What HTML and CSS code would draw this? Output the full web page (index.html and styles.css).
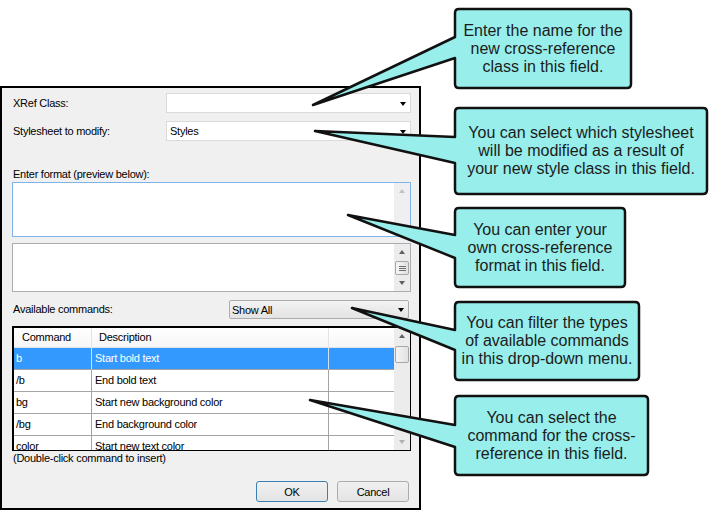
FILE: index.html
```html
<!DOCTYPE html>
<html>
<head>
<meta charset="utf-8">
<link rel="stylesheet" href="styles.css">
</head>
<body>
<div class="page">
  <div class="dialog">
    <div class="field-row">
      <span class="lbl">XRef Class:</span>
      <div class="combo"><span class="val"></span><span class="dd-arrow"></span></div>
    </div>
    <div class="field-row second">
      <span class="lbl">Stylesheet to modify:</span>
      <div class="combo"><span class="val">Styles</span><span class="dd-arrow"></span></div>
    </div>
    <div class="fmt-label">Enter format (preview below):</div>
    <div class="textbox tb1">
      <div class="tb-area"></div>
      <div class="vscroll light">
        <div class="sb-btn"><span class="arr-up dis"></span></div>
        <div class="spacer"></div>
        <div class="sb-btn"><span class="arr-down dis"></span></div>
      </div>
    </div>
    <div class="textbox tb2">
      <div class="tb-area"></div>
      <div class="vscroll">
        <div class="sb-btn"><span class="arr-up"></span></div>
        <div class="thumb small"><span class="grip"></span></div>
        <div class="spacer"></div>
        <div class="sb-btn"><span class="arr-down"></span></div>
      </div>
    </div>
    <div class="cmd-row">
      <span class="lbl">Available commands:</span>
      <div class="dd"><span class="val">Show All</span><span class="dd-arrow"></span></div>
    </div>
    <div class="listview">
      <div class="lv-body">
        <table class="grid">
          <thead>
            <tr><th class="c1">Command</th><th class="c2">Description</th><th class="c3"></th></tr>
          </thead>
          <tbody>
            <tr class="sel"><td>b</td><td>Start bold text</td><td></td></tr>
            <tr><td>/b</td><td>End bold text</td><td></td></tr>
            <tr><td>bg</td><td>Start new background color</td><td></td></tr>
            <tr><td>/bg</td><td>End background color</td><td></td></tr>
            <tr><td>color</td><td>Start new text color</td><td></td></tr>
          </tbody>
        </table>
      </div>
      <div class="vscroll">
        <div class="sb-btn"><span class="arr-up"></span></div>
        <div class="thumb big"></div>
        <div class="spacer"></div>
        <div class="sb-btn"><span class="arr-down dis"></span></div>
      </div>
    </div>
    <div class="hint">(Double-click command to insert)</div>
    <div class="buttons">
      <button class="btn ok">OK</button>
      <button class="btn">Cancel</button>
    </div>
  </div>
</div>

<svg class="callouts" width="716" height="511" viewBox="0 0 716 511" xmlns="http://www.w3.org/2000/svg">
  <path d="M459,9 H627 Q631,9 631,13 V84 Q631,88 627,88 H459 Q455,88 455,84 V58 L313,105 L455,37 V13 Q455,9 459,9 Z"/>
  <path d="M459,108 H703 Q707,108 707,112 V190 Q707,194 703,194 H459 Q455,194 455,190 V163 L315,131 L455,137 V112 Q455,108 459,108 Z"/>
  <path d="M459,208 H621 Q625,208 625,212 V283 Q625,287 621,287 H459 Q455,287 455,283 V258 L348,215 L455,235 V212 Q455,208 459,208 Z"/>
  <path d="M459,302 H635 Q639,302 639,306 V376 Q639,380 635,380 H459 Q455,380 455,376 V350 L352,308 L455,330 V306 Q455,302 459,302 Z"/>
  <path d="M459,396 H644 Q648,396 648,400 V471 Q648,475 644,475 H459 Q455,475 455,471 V447 L310,400 L455,425 V400 Q455,396 459,396 Z"/>
</svg>

<div class="callout-text ct1">Enter the name for the<br>new cross-reference<br>class in this field.</div>
<div class="callout-text ct2">You can select which stylesheet<br>will be modified as a result of<br>your new style class in this field.</div>
<div class="callout-text ct3">You can enter your<br>own cross-reference<br>format in this field.</div>
<div class="callout-text ct4">You can filter the types<br>of available commands<br>in this drop-down menu.</div>
<div class="callout-text ct5">You can select the<br>command for the cross-<br>reference in this field.</div>
</body>
</html>
```

FILE: styles.css
```css
* { box-sizing: border-box; }

html, body {
  margin: 0;
  padding: 0;
  background: #ffffff;
}

body {
  width: 716px;
  height: 511px;
  position: relative;
  overflow: hidden;
  font-family: "Liberation Sans", Arial, sans-serif;
}

.page {
  padding-top: 86px;
}

.dialog {
  width: 421px;
  height: 424px;
  border: 2px solid #000;
  background: #f0f0f0;
  padding: 5px 8px 0 10px;
  font-size: 11px;
  letter-spacing: -0.25px;
  color: #000;
}

.field-row {
  display: flex;
  height: 20px;
}

.field-row.second {
  margin-top: 8px;
}

.field-row .lbl {
  width: 154px;
  padding-left: 1px;
  line-height: 20px;
}

.combo {
  flex: 1;
  display: flex;
  align-items: center;
  height: 20px;
  background: #fff;
  border: 1px solid #dadada;
  padding: 0 4px 0 3px;
}

.val {
  flex: 1;
  white-space: nowrap;
}

.dd-arrow {
  width: 0;
  height: 0;
  border-left: 3.5px solid transparent;
  border-right: 3.5px solid transparent;
  border-top: 4px solid #000;
  margin-top: 1px;
}

.fmt-label {
  margin-top: 25px;
  height: 16px;
  line-height: 16px;
  padding-left: 1px;
}

.textbox {
  display: flex;
  background: #fff;
  border: 1px solid #abadb3;
}

.tb1 {
  height: 55px;
  margin-bottom: 6px;
  border-color: #7eb4ea;
}

.tb2 {
  height: 49px;
}

.tb-area {
  flex: 1;
}

.vscroll {
  width: 16px;
  display: flex;
  flex-direction: column;
  background: #ececec;
}

.vscroll.light {
  background: #efefef;
}

.sb-btn {
  height: 16px;
  display: flex;
  align-items: center;
  justify-content: center;
}

.arr-up {
  width: 0;
  height: 0;
  border-left: 3.5px solid transparent;
  border-right: 3.5px solid transparent;
  border-bottom: 4px solid #606060;
}

.arr-down {
  width: 0;
  height: 0;
  border-left: 3.5px solid transparent;
  border-right: 3.5px solid transparent;
  border-top: 4px solid #606060;
}

.arr-up.dis { border-bottom-color: #c2c2c2; }
.arr-down.dis { border-top-color: #b0b0b0; }

.spacer {
  flex: 1;
}

.thumb {
  margin: 0 1px;
  border: 1px solid #a7a7a7;
  border-radius: 2px;
  background: linear-gradient(90deg, #f4f4f4, #e2e2e2);
  display: flex;
  align-items: center;
  justify-content: center;
}

.thumb.small {
  height: 14px;
  margin-top: 1px;
}

.thumb.big {
  height: 17px;
  margin-top: 2px;
}

.grip {
  width: 7px;
  height: 5px;
  border-top: 1px solid #6f6f6f;
  border-bottom: 1px solid #6f6f6f;
  background: linear-gradient(#6f6f6f, #6f6f6f) center / 100% 1px no-repeat;
}

.cmd-row {
  display: flex;
  height: 19px;
  margin-top: 8px;
}

.cmd-row .lbl {
  line-height: 19px;
  padding-left: 1px;
}

.dd {
  margin-left: auto;
  margin-right: 2px;
  width: 180px;
  height: 19px;
  display: flex;
  align-items: center;
  border: 1px solid #acacac;
  border-radius: 2px;
  background: linear-gradient(#f3f3f3, #e3e3e3);
  padding: 0 4px 0 2px;
}

.listview {
  margin-top: 7px;
  height: 125px;
  display: flex;
  background: #fff;
  border-top: 2px solid #000;
  border-left: 2px solid #000;
  border-right: 1px solid #000;
  border-bottom: 1px solid #000;
}

.lv-body {
  flex: 1;
  overflow: hidden;
}

.grid {
  border-collapse: separate;
  border-spacing: 0;
  table-layout: fixed;
  width: 381px;
}

.grid th {
  height: 20px;
  padding: 0 0 0 7px;
  font-weight: normal;
  text-align: left;
  line-height: 19px;
  background: linear-gradient(#ffffff, #f6f6f6);
  border-right: 1px solid #e3e3e3;
  border-bottom: 1px solid #e3e3e3;
  white-space: nowrap;
}

.grid th.c1 { width: 78px; padding-left: 8px; }
.grid th.c2 { width: 237px; }
.grid th.c3 { width: 66px; border-right: none; }

.grid td {
  height: 22px;
  line-height: 21px;
  padding: 0 0 0 3px;
  border-right: 1px solid #a4a4a4;
  border-bottom: 1px solid #a4a4a4;
  white-space: nowrap;
  overflow: hidden;
}

.grid td:first-child { padding-left: 2px; }
.grid td:last-child { border-right: none; }

.grid tr.sel td {
  background: #3399ff;
  color: #fff;
  border-right-color: #cfe3f7;
}

.grid tr.sel td:last-child { border-right: none; }

.hint {
  height: 14px;
  line-height: 14px;
  margin-top: 0;
  padding-left: 1px;
}

.buttons {
  display: flex;
  justify-content: flex-end;
  gap: 9px;
  margin-top: 16px;
  padding-right: 2px;
}

.btn {
  width: 72px;
  height: 21px;
  padding: 0;
  border: 1px solid #acacac;
  border-radius: 3px;
  background: linear-gradient(#f0f0f0, #e4e4e4);
  font-family: "Liberation Sans", Arial, sans-serif;
  font-size: 11px;
  letter-spacing: -0.25px;
  color: #000;
}

.btn.ok {
  border-color: #3c7fb1;
}

.callouts {
  position: absolute;
  left: 0;
  top: 0;
  pointer-events: none;
}

.callouts path {
  fill: #97eeeb;
  stroke: #111;
  stroke-width: 2.5;
  stroke-linejoin: round;
}

.callout-text {
  position: absolute;
  left: 455px;
  display: flex;
  align-items: center;
  justify-content: center;
  text-align: center;
  font-family: "Liberation Sans", Arial, sans-serif;
  font-size: 16px;
  line-height: 18px;
  color: #1c1c1c;
}

.ct1 { top: 9px; width: 176px; height: 79px; }
.ct2 { top: 108px; width: 252px; height: 86px; }
.ct3 { top: 208px; width: 170px; height: 79px; }
.ct4 { top: 302px; width: 184px; height: 78px; }
.ct5 { top: 396px; width: 193px; height: 79px; }
```
